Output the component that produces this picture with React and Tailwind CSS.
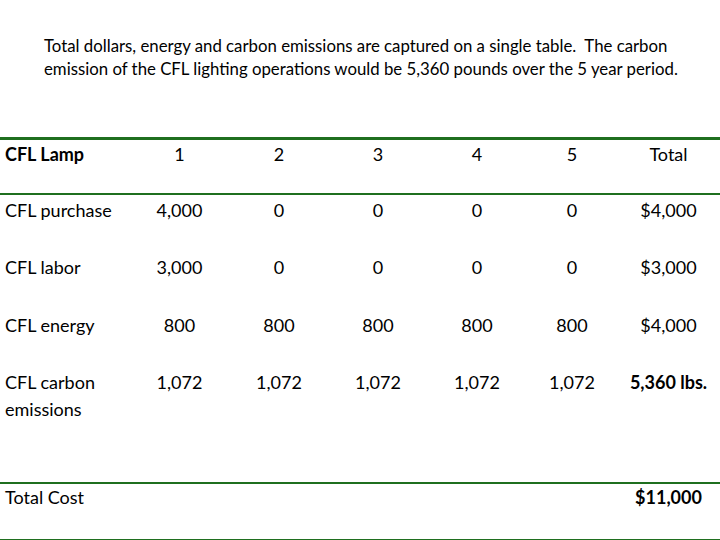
import React from "react";

const cols = "grid grid-cols-[130px_99px_100px_98px_100px_90px_103px]";

function Row({ cells, className = "", lh = "leading-[23px]", label }) {
  return (
    <div className={`${cols} ${className}`}>
      <div className={`pl-[5px] ${lh}`}>{label}</div>
      {cells.map((c, i) => (
        <div key={i} className={`text-center ${lh} ${c.bold ? "font-bold" : ""}`}>
          {c.t}
        </div>
      ))}
    </div>
  );
}

export default function App() {
  const n = (t, bold) => ({ t, bold });
  return (
    <div
      className="w-[720px] h-[540px] bg-white text-black overflow-hidden"
      style={{ fontFamily: "Lato, 'Open Sans', sans-serif" }}
    >
      <div className="pt-[34px] pl-[44px] text-[16.8px] leading-[23px] whitespace-nowrap">
        <div>Total dollars, energy and carbon emissions are captured on a single table.&nbsp; The carbon</div>
        <div>emission of the CFL lighting operations would be 5,360 pounds over the 5 year period.</div>
      </div>
      <div className="mt-[57px] text-[18px]">
        <Row
          className="border-t-[3px] border-[#1f6f1f] h-[56px] pt-[3px]"
          label={<span className="font-bold">CFL Lamp</span>}
          cells={[n("1"), n("2"), n("3"), n("4"), n("5"), n("Total")]}
        />
        <Row
          className="border-t-[2px] border-[#1f6f1f] h-[58px] pt-[4px]"
          label="CFL purchase"
          cells={[n("4,000"), n("0"), n("0"), n("0"), n("0"), n("$4,000")]}
        />
        <Row
          className="h-[57px] pt-[5px]"
          label="CFL labor"
          cells={[n("3,000"), n("0"), n("0"), n("0"), n("0"), n("$3,000")]}
        />
        <Row
          className="h-[58px] pt-[6px]"
          label="CFL energy"
          cells={[n("800"), n("800"), n("800"), n("800"), n("800"), n("$4,000")]}
        />
        <Row
          className="h-[116px] pt-[3px]"
          lh="leading-[27px]"
          label={<>CFL carbon<br />emissions</>}
          cells={[n("1,072"), n("1,072"), n("1,072"), n("1,072"), n("1,072"), n("5,360 lbs.", true)]}
        />
        <Row
          className="border-t-[2px] border-b border-[#1f6f1f] h-[58px] pt-[2px]"
          label="Total Cost"
          cells={[n(""), n(""), n(""), n(""), n(""), n("$11,000", true)]}
        />
      </div>
    </div>
  );
}
